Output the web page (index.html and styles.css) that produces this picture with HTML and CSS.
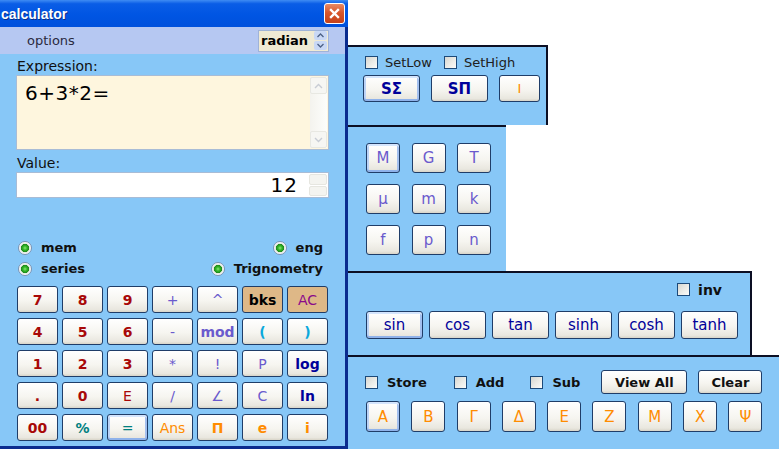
FILE: index.html
```html
<!DOCTYPE html>
<html lang="en">
<head>
  <meta charset="UTF-8" />
  <title>calculator</title>
  <link rel="stylesheet" href="styles.css">
</head>
<body>
  <div class="screen">
    <div class="calc">
      <div class="titlebar">
        <span class="title">calculator</span>
        <div class="close">
          <svg width="11" height="11" viewBox="0 0 11 11"><path d="M2 2 L9 9 M9 2 L2 9" stroke="#fff" stroke-width="2.4" stroke-linecap="square"/></svg>
        </div>
      </div>
      <div class="options">
        <span>options</span>
        <div class="mode">
          <span>radian</span>
          <div class="arrows">
            <div class="arr"><svg width="7" height="5" viewBox="0 0 7 5"><path d="M0.5 4 L3.5 1 L6.5 4" fill="none" stroke="#4d6185" stroke-width="1.3"/></svg></div>
            <div class="arr"><svg width="7" height="5" viewBox="0 0 7 5"><path d="M0.5 1 L3.5 4 L6.5 1" fill="none" stroke="#4d6185" stroke-width="1.3"/></svg></div>
          </div>
        </div>
      </div>

      <div class="calc-body">
        <div class="lbl">Expression:</div>
        <div class="expr">
          <div class="expr-text">6+3*2=</div>
          <div class="vscroll">
            <div class="sbtn"><svg width="9" height="6" viewBox="0 0 9 6"><path d="M1 5 L4.5 1.5 L8 5" fill="none" stroke="#c8ccd4" stroke-width="1.4"/></svg></div>
            <div class="sbtn"><svg width="9" height="6" viewBox="0 0 9 6"><path d="M1 1 L4.5 4.5 L8 1" fill="none" stroke="#c8ccd4" stroke-width="1.4"/></svg></div>
          </div>
        </div>
        <div class="lbl lbl-value">Value:</div>
        <div class="value">
          <span class="value-text">12</span>
          <div class="vspin">
            <div class="vsbtn"></div>
            <div class="vsbtn"></div>
          </div>
        </div>

        <div class="radios">
          <div class="radio-row">
            <label class="radio"><span class="dot"></span>mem</label>
            <label class="radio"><span class="dot"></span>eng</label>
          </div>
          <div class="radio-row">
            <label class="radio"><span class="dot"></span>series</label>
            <label class="radio"><span class="dot"></span>Trignometry</label>
          </div>
        </div>

        <div class="keys">
          <button class="btn num">7</button>
          <button class="btn num">8</button>
          <button class="btn num">9</button>
          <button class="btn op">+</button>
          <button class="btn op">^</button>
          <button class="btn tan-bg bks">bks</button>
          <button class="btn tan-bg ac">AC</button>

          <button class="btn num">4</button>
          <button class="btn num">5</button>
          <button class="btn num">6</button>
          <button class="btn op">-</button>
          <button class="btn op bold">mod</button>
          <button class="btn paren">(</button>
          <button class="btn paren">)</button>

          <button class="btn num">1</button>
          <button class="btn num">2</button>
          <button class="btn num">3</button>
          <button class="btn op">*</button>
          <button class="btn op">!</button>
          <button class="btn op">P</button>
          <button class="btn fn">log</button>

          <button class="btn num">.</button>
          <button class="btn num">0</button>
          <button class="btn num thin">E</button>
          <button class="btn op">/</button>
          <button class="btn op">∠</button>
          <button class="btn op">C</button>
          <button class="btn fn">ln</button>

          <button class="btn num">00</button>
          <button class="btn teal bold">%</button>
          <button class="btn teal default">=</button>
          <button class="btn orange">Ans</button>
          <button class="btn orange bold">Π</button>
          <button class="btn orange bold">e</button>
          <button class="btn orange bold">i</button>
        </div>
      </div>
    </div>

    <div class="side">
      <div class="panel panel-sum">
        <div class="checks">
          <label class="check"><span class="box"></span>SetLow</label>
          <label class="check"><span class="box"></span>SetHigh</label>
        </div>
        <div class="sum-btns">
          <button class="btn navy default w57">SΣ</button>
          <button class="btn navy w57">SΠ</button>
          <button class="btn orange-thin w41">I</button>
        </div>
      </div>

      <div class="panel panel-prefix">
        <button class="btn prefix default">M</button>
        <button class="btn prefix">G</button>
        <button class="btn prefix">T</button>
        <button class="btn prefix">µ</button>
        <button class="btn prefix">m</button>
        <button class="btn prefix">k</button>
        <button class="btn prefix">f</button>
        <button class="btn prefix">p</button>
        <button class="btn prefix">n</button>
      </div>

      <div class="panel panel-trig">
        <div class="inv-row">
          <label class="check bold-lbl"><span class="box"></span>inv</label>
        </div>
        <div class="trig-btns">
          <button class="btn trig default">sin</button>
          <button class="btn trig">cos</button>
          <button class="btn trig">tan</button>
          <button class="btn trig">sinh</button>
          <button class="btn trig">cosh</button>
          <button class="btn trig">tanh</button>
        </div>
      </div>

      <div class="panel panel-mem">
        <div class="mem-top">
          <label class="check bold-lbl store"><span class="box"></span>Store</label>
          <label class="check bold-lbl add"><span class="box"></span>Add</label>
          <label class="check bold-lbl sub"><span class="box"></span>Sub</label>
          <button class="btn plain view-all">View All</button>
          <button class="btn plain clear">Clear</button>
        </div>
        <div class="greek">
          <button class="btn greek-btn default">Α</button>
          <button class="btn greek-btn">Β</button>
          <button class="btn greek-btn">Γ</button>
          <button class="btn greek-btn">Δ</button>
          <button class="btn greek-btn">Ε</button>
          <button class="btn greek-btn">Ζ</button>
          <button class="btn greek-btn">Μ</button>
          <button class="btn greek-btn">Χ</button>
          <button class="btn greek-btn">Ψ</button>
        </div>
      </div>
    </div>
  </div>
</body>
</html>
```

FILE: styles.css
```css
body {
  margin: 0;
  background: #ffffff;
  font-family: "DejaVu Sans", Verdana, sans-serif;
  overflow: hidden;
}
.screen {
  display: flex;
  align-items: flex-start;
  width: 779px;
  height: 449px;
}

/* calculator window */
.calc {
  width: 348px;
  height: 449px;
  box-sizing: border-box;
  background: #87c7f7;
  border-right: 3px solid #0b2c8e;
  border-bottom: 3px solid #0b2c8e;
  flex-shrink: 0;
}
.titlebar {
  height: 27px;
  margin-right: -3px;
  background: linear-gradient(180deg, #3f8cf3 0%, #0a5de6 14%, #0055e3 55%, #0051dc 100%);
  display: flex;
  align-items: center;
  justify-content: space-between;
  padding: 0 3px 0 1px;
}
.title {
  color: #fff;
  font-family: "Liberation Sans", Arial, sans-serif;
  font-weight: bold;
  font-size: 14px;
  text-shadow: 1px 1px 0 #0a2f8a;
}
.close {
  width: 19px;
  height: 19px;
  border: 1px solid #fff;
  border-radius: 3px;
  background: linear-gradient(180deg, #e88a64 0%, #d8572c 45%, #c5421a 100%);
  display: flex;
  align-items: center;
  justify-content: center;
}
.options {
  height: 27px;
  background: #b6c8f2;
  display: flex;
  align-items: center;
  justify-content: space-between;
  padding: 0 16px 0 27px;
  font-size: 13px;
  color: #2a2a40;
}
.mode {
  width: 71px;
  height: 22px;
  box-sizing: border-box;
  border: 1px solid #9fb3d9;
  background: #efead4;
  display: flex;
  align-items: center;
  justify-content: space-between;
  padding-left: 2px;
  font-weight: bold;
  font-size: 13px;
  color: #000;
}
.arrows {
  display: flex;
  flex-direction: column;
  gap: 1px;
  padding: 1px;
}
.arr {
  width: 13px;
  height: 9px;
  background: #c9d8f5;
  border-radius: 2px;
  display: flex;
  align-items: center;
  justify-content: center;
}

.calc-body {
  padding: 4px 16px 0 16px;
}
.lbl {
  font-size: 14px;
  line-height: 17px;
  color: #101010;
  padding-left: 1px;
}
.lbl-value {
  margin-top: 5px;
}
.expr {
  height: 75px;
  box-sizing: border-box;
  border: 1px solid #a8bcd6;
  background: #fef6de;
  display: flex;
  justify-content: space-between;
}
.expr-text {
  font-size: 20px;
  padding: 5px 0 0 8px;
  color: #000;
  letter-spacing: 0.5px;
}
.vscroll {
  width: 17px;
  margin: 1px;
  background: linear-gradient(90deg, #f4f3ee, #fdfdfb);
  display: flex;
  flex-direction: column;
  justify-content: space-between;
}
.sbtn {
  height: 17px;
  background: #f6f6f3;
  border: 1px solid #e8e8e2;
  border-radius: 2px;
  box-sizing: border-box;
  display: flex;
  align-items: center;
  justify-content: center;
}
.value {
  height: 26px;
  box-sizing: border-box;
  border: 1px solid #a8bcd6;
  background: #fff;
  display: flex;
  align-items: center;
  justify-content: flex-end;
}
.value-text {
  font-size: 20px;
  color: #000;
  letter-spacing: 1px;
  margin-right: 11px;
}
.vspin {
  width: 18px;
  height: 22px;
  margin-right: 1px;
  display: flex;
  flex-direction: column;
  gap: 1px;
}
.vsbtn {
  flex: 1;
  background: #f4f4f0;
  border: 1px solid #e6e6e0;
  border-radius: 2px;
}

.radios {
  margin-top: 39px;
  padding: 0 6px 0 2px;
}
.radio-row {
  display: flex;
  justify-content: space-between;
  height: 21px;
  align-items: center;
}
.radio {
  display: flex;
  align-items: center;
  gap: 9px;
  font-size: 13px;
  font-weight: bold;
  color: #101010;
}
.dot {
  width: 14px;
  height: 14px;
  box-sizing: border-box;
  border: 1px solid #7b93b3;
  border-radius: 50%;
  background: radial-gradient(circle at 50% 50%, #8ae873 0, #35b82a 2px, #1e8c1a 3.8px, #dfe6df 4.4px, #ffffff 6px);
}

.keys {
  margin-top: 7px;
  padding-left: 1px;
  display: grid;
  grid-template-columns: repeat(7, 41px);
  grid-auto-rows: 27px;
  gap: 5px 4px;
}

/* xp style buttons */
.btn {
  font-family: "DejaVu Sans", Verdana, sans-serif;
  border: 1px solid #1f3d68;
  border-radius: 3px;
  background: linear-gradient(180deg, #ffffff 0%, #f6f5f0 55%, #e9e7df 90%, #d8d4c8 100%);
  padding: 0;
  font-size: 14px;
  color: #000;
  display: flex;
  align-items: center;
  justify-content: center;
  box-sizing: border-box;
}
.default {
  box-shadow: inset 0 2px 0 #d4e5fd, inset 0 -2px 0 #8fb2ea, inset 2px 0 0 #bcd3f6, inset -2px 0 0 #a3c0ef;
}
.num {
  color: #a80808;
  font-weight: bold;
}
.num.thin {
  font-weight: normal;
}
.op {
  color: #6a5acd;
}
.bold {
  font-weight: bold;
}
.tan-bg {
  background: #deb887;
}
.bks {
  font-weight: bold;
  color: #000;
}
.ac {
  color: #8a0a8a;
}
.paren {
  color: #0aa8dc;
  font-weight: bold;
}
.fn {
  color: #00009a;
  font-weight: bold;
}
.teal {
  color: #008080;
}
.orange {
  color: #ff8c00;
}

/* side panels */
.side {
  margin-top: 45px;
  display: flex;
  flex-direction: column;
  align-items: flex-start;
}
.panel {
  background: #87c7f7;
  box-sizing: border-box;
  border-top: 2px solid #0c0f24;
  border-right: 2px solid #0c0f24;
}
.panel-sum {
  width: 200px;
  height: 80px;
  padding: 7px 0 0 17px;
}
.checks {
  display: flex;
  gap: 12px;
  height: 16px;
  align-items: center;
}
.check {
  display: flex;
  align-items: center;
  gap: 7px;
  font-size: 13px;
  color: #202020;
}
.box {
  width: 13px;
  height: 13px;
  box-sizing: border-box;
  border: 1px solid #1c4a7a;
  background: linear-gradient(135deg, #d6d6d0 0%, #eeeeea 60%, #fbfbf9 100%);
}
.bold-lbl {
  font-weight: bold;
  color: #101010;
}
.sum-btns {
  margin-top: 5px;
  margin-left: -2px;
  display: flex;
  gap: 11px;
}
.w57 {
  width: 57px;
  height: 27px;
}
.w41 {
  width: 41px;
  height: 27px;
}
.navy {
  color: #00009a;
  font-weight: bold;
  font-size: 15px;
}
.orange-thin {
  color: #ff8c00;
  font-size: 13px;
}

.panel-prefix {
  width: 158px;
  height: 146px;
  border-right: none;
  padding: 16px 0 0 18px;
  display: grid;
  grid-template-columns: repeat(3, 34px);
  grid-auto-rows: 30px;
  gap: 11px 11.5px;
  align-content: start;
}
.prefix {
  color: #6a5acd;
  font-size: 15px;
}

.panel-trig {
  width: 404px;
  height: 86px;
  border-bottom: 2px solid #0c0f24;
  padding: 8px 0 0 18px;
}
.inv-row {
  display: flex;
  justify-content: flex-end;
  padding-right: 28px;
  height: 17px;
}
.inv-row .check {
  gap: 8px;
  font-size: 14px;
}
.trig-btns {
  margin-top: 13px;
  display: flex;
  gap: 6px;
}
.trig {
  width: 57px;
  height: 28px;
  color: #00009a;
  font-size: 15px;
}

.panel-mem {
  width: 431px;
  height: 94px;
  border: none;
  margin-top: -2px;
  border-top: 2px solid #0c0f24;
  padding: 13px 0 0 17px;
}
.mem-top {
  display: flex;
  align-items: center;
  height: 24px;
}
.mem-top .check {
  gap: 9px;
}
.add {
  margin-left: 27px;
}
.sub {
  margin-left: 26px;
}
.plain {
  height: 24px;
  font-size: 13px;
  font-weight: bold;
  color: #111;
}
.view-all {
  width: 86px;
  margin-left: 21px;
}
.clear {
  width: 64px;
  margin-left: 11px;
}
.greek {
  margin-top: 7px;
  margin-left: 1px;
  display: flex;
  gap: 11.3px;
}
.greek-btn {
  width: 34px;
  height: 31px;
  color: #ff8c00;
  font-size: 15px;
}
```
